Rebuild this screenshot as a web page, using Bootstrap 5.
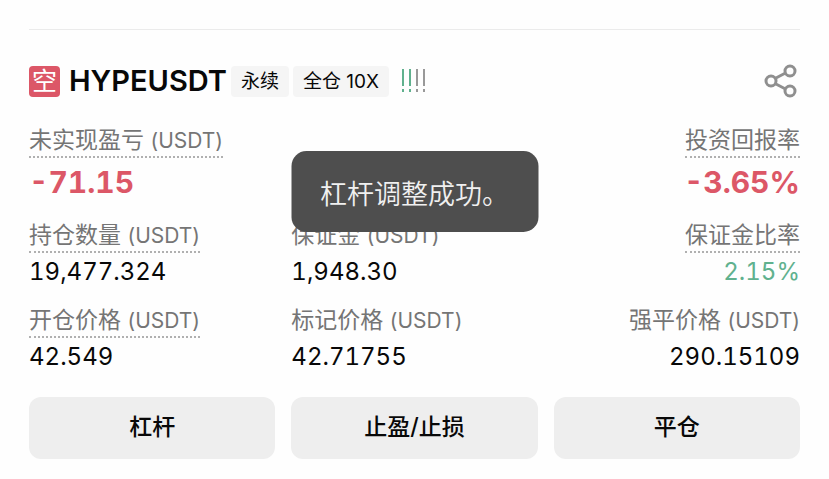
<!DOCTYPE html>
<html lang="zh-CN">
<head>
<meta charset="utf-8">
<meta name="viewport" content="width=device-width, initial-scale=1">
<title>HYPEUSDT 永续</title>
<link href="https://cdn.jsdelivr.net/npm/bootstrap@5.3.0/dist/css/bootstrap.min.css" rel="stylesheet">
<style>
  body { font-family: Inter, "Noto Sans CJK SC", sans-serif; color: #080808; background: #fefefe; }
  .position-panel { padding: 29px 29px 20px; }
  .divider { border-top: 1px solid #ebebeb; height: 35px; }
  .side-tag { width: 31px; height: 31px; border-radius: 4px; background: #dc5767; color: #fff; font-size: 25px; line-height: 30px; }
  .symbol { font-size: 29px; line-height: 32px; font-weight: 600; margin: 0 4px 0 9px; }
  .chip { height: 31px; padding: 0 10px; border-radius: 4px; background: #f5f5f5; font-size: 19px; line-height: 31px; }
  .share { color: #8f8f8f; }
  .stats { row-gap: 17px; margin-top: 30px; }
  .stat-name { height: 30px; font-size: 23px; line-height: 24px; color: #757575; }
  .stat-name .unit { font-size: 21px; }
  .stat-name.hint { border-bottom: 2px dotted #b0b0b0; }
  .stat-value { font-size: 24px; line-height: 38px; font-variant-numeric: tabular-nums; }
  .stat-value.big { font-size: 30px; line-height: 48px; font-weight: 700; color: #dc5767; }
  .stat-value.gain { color: #60b18e; }
  .actions { margin-top: 21px; }
  .action { height: 62px; border-radius: 12px; background: #eee; font-size: 23px; line-height: 32px; padding: 0 0 2px; font-weight: 500; color: #080808; }
  .notice { top: 151px; padding: 27px 29px 21px; border-radius: 15px; background: #4e4e4e; color: #f0f0f0; font-size: 27px; line-height: 33px; font-weight: 350; }
</style>
</head>
<body>
<main class="position-panel position-relative">
  <div class="divider"></div>
  <header class="d-flex align-items-center">
    <span class="side-tag text-center">空</span>
    <h1 class="symbol">HYPEUSDT</h1>
    <div class="d-flex gap-1">
      <span class="chip">永续</span>
      <span class="chip">全仓 10X</span>
    </div>
    <svg class="ms-2" width="34" height="28" viewBox="0 0 34 28" fill="none" stroke-width="2" aria-hidden="true">
      <path d="M6 2v17M6 22v3M13 2v17M13 22v3" stroke="#60b18e"/>
      <path d="M20 2v17M20 22v3M27 2v17M27 22v3" stroke="#999"/>
    </svg>
    <button type="button" class="share btn p-0 border-0 ms-auto d-flex" aria-label="分享">
      <svg width="36" height="34" viewBox="0 0 36 34" fill="none" stroke="currentColor" stroke-width="3">
        <circle cx="7" cy="17" r="5"/><circle cx="26" cy="7" r="5"/><circle cx="26" cy="27" r="5"/>
        <path d="M11 14.500l10.500-5.500M11 19.500l10.500 5.500"/>
      </svg>
    </button>
  </header>

  <section class="stats row gx-3">
    <div class="col-8 d-flex flex-column align-items-start">
      <div class="stat-name hint">未实现盈亏 <span class="unit">(USDT)</span></div>
      <div class="stat-value big">-71.15</div>
    </div>
    <div class="col-4 d-flex flex-column align-items-end">
      <div class="stat-name hint">投资回报率</div>
      <div class="stat-value big">-3.65%</div>
    </div>
    <div class="col-4 d-flex flex-column align-items-start">
      <div class="stat-name hint">持仓数量 <span class="unit">(USDT)</span></div>
      <div class="stat-value">19,477.324</div>
    </div>
    <div class="col-4 d-flex flex-column align-items-start">
      <div class="stat-name">保证金 <span class="unit">(USDT)</span></div>
      <div class="stat-value">1,948.30</div>
    </div>
    <div class="col-4 d-flex flex-column align-items-end">
      <div class="stat-name hint">保证金比率</div>
      <div class="stat-value gain">2.15%</div>
    </div>
    <div class="col-4 d-flex flex-column align-items-start">
      <div class="stat-name hint">开仓价格 <span class="unit">(USDT)</span></div>
      <div class="stat-value">42.549</div>
    </div>
    <div class="col-4 d-flex flex-column align-items-start">
      <div class="stat-name">标记价格 <span class="unit">(USDT)</span></div>
      <div class="stat-value">42.71755</div>
    </div>
    <div class="col-4 d-flex flex-column align-items-end">
      <div class="stat-name">强平价格 <span class="unit">(USDT)</span></div>
      <div class="stat-value">290.15109</div>
    </div>
  </section>

  <div class="actions row gx-3">
    <div class="col-4"><button type="button" class="action btn border-0 w-100">杠杆</button></div>
    <div class="col-4"><button type="button" class="action btn border-0 w-100">止盈/止损</button></div>
    <div class="col-4"><button type="button" class="action btn border-0 w-100">平仓</button></div>
  </div>

  <div class="notice position-absolute start-50 translate-middle-x text-nowrap" role="status">杠杆调整成功。</div>
</main>
<script src="https://cdn.jsdelivr.net/npm/bootstrap@5.3.0/dist/js/bootstrap.bundle.min.js"></script>
</body>
</html>
